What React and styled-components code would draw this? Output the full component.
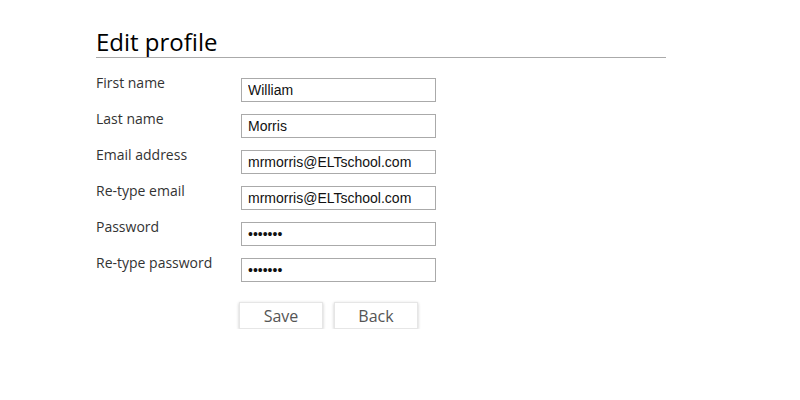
import React from "react";
import styled, { createGlobalStyle } from "styled-components";

const Global = createGlobalStyle`
  html, body { margin: 0; padding: 0; background: #fff; }
  body { font-family: "Open Sans", sans-serif; }
`;

const Page = styled.div`
  width: 570px;
  padding: 27px 0 0 96px;
`;

const Heading = styled.h1`
  margin: 0;
  font-family: "Open Sans", sans-serif;
  font-weight: 400;
  font-size: 24px;
  line-height: 30px;
  color: #000;
  border-bottom: 1px solid #aaa;
`;

const Form = styled.form`
  margin-top: 14px;
  display: flex;
  flex-direction: column;
  gap: 6px;
`;

const Row = styled.div`
  display: grid;
  grid-template-columns: 145px 195px;
  height: 30px;
`;

const Label = styled.label`
  font-family: "Open Sans", sans-serif;
  font-size: 14px;
  line-height: 22px;
  color: #333;
`;

const Input = styled.input`
  box-sizing: border-box;
  margin-top: 6px;
  width: 195px;
  height: 24px;
  padding: 0 6px;
  border: 1px solid #aaa;
  border-radius: 0;
  font-family: "Liberation Sans", Arial, sans-serif;
  font-size: 14px;
  color: #111;
  background: #fff;
  outline: none;
`;

const Buttons = styled.div`
  display: flex;
  gap: 11px;
  margin: 14px 0 0 143px;
`;

const Button = styled.button`
  box-sizing: border-box;
  width: 84px;
  height: 27px;
  padding: 0;
  background: #fff;
  border: 1px solid #e6e6e6;
  border-radius: 0;
  box-shadow: 0 1px 3px rgba(0, 0, 0, 0.22);
  font-family: "Open Sans", sans-serif;
  font-size: 16px;
  color: #555;
  cursor: pointer;
`;

const fields = [
  { label: "First name", type: "text", value: "William" },
  { label: "Last name", type: "text", value: "Morris" },
  { label: "Email address", type: "text", value: "mrmorris@ELTschool.com" },
  { label: "Re-type email", type: "text", value: "mrmorris@ELTschool.com" },
  { label: "Password", type: "password", value: "1234567" },
  { label: "Re-type password", type: "password", value: "1234567" },
];

export default function App() {
  return (
    <>
      <Global />
      <Page>
        <Heading>Edit profile</Heading>
        <Form onSubmit={(e) => e.preventDefault()}>
          {fields.map((f) => (
            <Row key={f.label}>
              <Label>{f.label}</Label>
              <Input type={f.type} defaultValue={f.value} />
            </Row>
          ))}
          <Buttons>
            <Button type="button">Save</Button>
            <Button type="button">Back</Button>
          </Buttons>
        </Form>
      </Page>
    </>
  );
}
